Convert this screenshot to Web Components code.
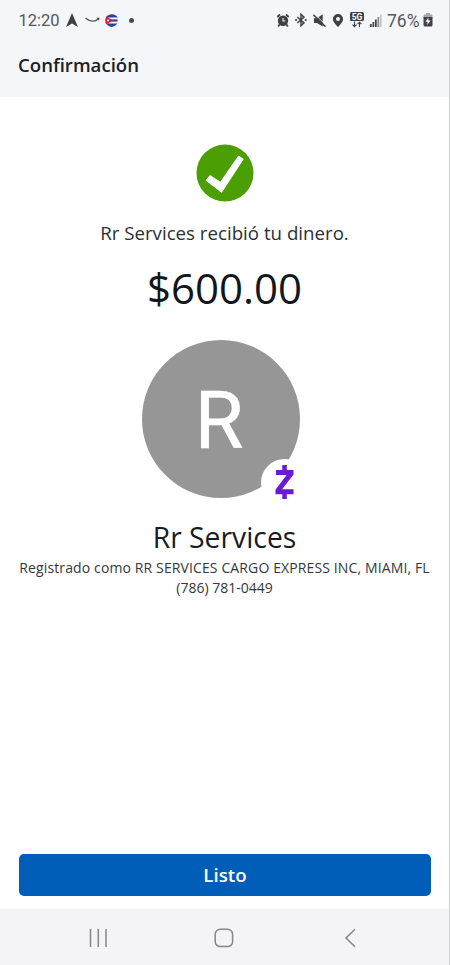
<!DOCTYPE html>
<html lang="es">
<head>
<meta charset="utf-8">
<title>Confirmación</title>
<style>
  html, body { margin: 0; height: 100%; }
  body { font-family: "Open Sans", "Noto Sans", sans-serif; background: #fff; overflow: hidden; }
</style>
</head>
<body>
<confirm-screen>
  <status-bar slot="top" time="12:20" battery="76%"></status-bar>
  <page-title slot="top">Confirmación</page-title>
  <success-check></success-check>
  <payment-message amount="$600.00">Rr Services recibió tu dinero.</payment-message>
  <contact-avatar initial="R"></contact-avatar>
  <contact-info name="Rr Services">
    <span>Registrado como RR SERVICES CARGO EXPRESS INC, MIAMI, FL</span>
    <span slot="phone">(786) 781-0449</span>
  </contact-info>
  <main-button slot="bottom">Listo</main-button>
  <nav-bar slot="bottom"></nav-bar>
</confirm-screen>

<script>
// every element clones its own template into an open shadow root
class BaseElement extends HTMLElement {
  constructor () {
    super();
    const template = document.createElement('template');
    template.innerHTML = this.constructor.html;
    this.attachShadow({ mode: 'open' });
    this.shadowRoot.appendChild(template.content.cloneNode(true));
  }

  fill (id, attr) {
    this.shadowRoot.getElementById(id).textContent = this.getAttribute(attr);
  }
}

class ConfirmScreen extends BaseElement {
  static html = `
    <style>
      :host {
        display: flex;
        flex-direction: column;
        box-sizing: border-box;
        height: 965px;
        width: 450px;
        border-right: 1px solid #cfd0d2;
        background: #fff;
      }
      header { height: 97px; background: #f5f6f9; }
      main {
        flex: 1;
        display: flex;
        flex-direction: column;
        align-items: center;
      }
    </style>
    <header><slot name="top"></slot></header>
    <main><slot></slot></main>
    <footer><slot name="bottom"></slot></footer>
  `;
}

class StatusBar extends BaseElement {
  static html = `
    <style>
      :host {
        display: flex;
        align-items: center;
        box-sizing: border-box;
        height: 40px;
        padding: 0 16px 0 18px;
        font: 16.5px/20px Roboto, sans-serif;
        color: #55575a;
      }
      svg { display: block; flex: none; fill: #3f4144; }
      .left, .right { display: flex; align-items: center; }
      .right { margin-left: auto; gap: 6px; }
      #time { width: 42px; padding-top: 1px; text-indent: 0.5px; }
      .arrow { margin-left: 6px; }
      .smile { margin-left: 7px; }
      .flag { margin-left: 5px; }
      .dot { margin-left: 11px; width: 5px; height: 5px; border-radius: 50%; background: #4a4c4f; }
      #battery { width: 35px; margin-left: -1px; padding-top: 1px; font-size: 17.5px; }
      .cell { margin-left: -5px; }
    </style>
    <div class="left">
      <span id="time"></span>
      <svg class="arrow" width="12" height="14" viewBox="0 0 12 14"><path d="M6 0L12 14L6 10.6L0 14Z"/></svg>
      <svg class="smile" width="15" height="8" viewBox="0 0 15 8"><path d="M.5 2C5 6 10 6 13.2 3" fill="none" stroke="#55575a" stroke-width="1.4"/><path d="M11.4 1.8L14.6 1.7L14 4.6"/></svg>
      <svg class="flag" width="13" height="13" viewBox="0 0 13 13">
        <path d="M2 2Q6-1 11 1.5L13 3.5H1Z" fill="#27449b"/>
        <path d="M1 5.4H12.5V7.6H1Z" fill="#27449b"/>
        <path d="M1.5 9.5H12.5Q8 15 3 11.6Z" fill="#27449b"/>
        <path d="M1.4 2.4L8 6.5L1.4 10.6Q-1 6.5 1.4 2.4Z" fill="#d51f3d"/>
        <circle cx="3" cy="6.5" r="1.1" fill="#fff"/>
      </svg>
      <span class="dot"></span>
    </div>
    <div class="right">
      <svg width="12" height="13" viewBox="0 0 12 13">
        <path d="M.3 3L3 .5M11.7 3L9 .5" stroke="#3f4144" stroke-width="1.9"/>
        <circle cx="6" cy="6.8" r="5.2"/><path d="M2.5 10.5L1.2 12.5M9.5 10.5L10.8 12.5" stroke="#3f4144" stroke-width="1.8"/>
        <path d="M6 4V7H8.4" fill="none" stroke="#f5f6f9" stroke-width="1.1"/>
      </svg>
      <svg width="12" height="14" viewBox="0 0 12 14"><path d="M2.3 4L9 9.9L6 12.8V1.2L9 4.1L2.3 10" fill="none" stroke="#3f4144" stroke-width="1.5"/><circle cx="1.1" cy="7" r="1.1"/><circle cx="10.7" cy="7" r="1.1"/></svg>
      <svg width="13" height="13" viewBox="0 0 13 13"><path d="M1 4.2H4L9.7 .3V12.4L4 9H1Z"/><path d="M1.4-.4L13.4 11.8" stroke="#f5f6f9" stroke-width=".9"/><path d="M.4 .8L12.4 12.6" stroke="#3f4144" stroke-width="1.5"/></svg>
      <svg width="12" height="13" viewBox="0 0 12 13"><path fill-rule="evenodd" d="M6 .1A5.1 5.1 0 0 1 11.1 5.2C11.1 8.4 6 12.9 6 12.9S.9 8.4 .9 5.2A5.1 5.1 0 0 1 6 .1ZM6 3.1A2 2 0 1 0 6 7.1A2 2 0 1 0 6 3.1Z"/></svg>
      <svg width="14" height="16" viewBox="0 0 14 16">
        <rect x="0" y="0" width="14" height="9" rx="1.6"/>
        <text x="7" y="7.7" text-anchor="middle" style="font:bold 8.5px Roboto" fill="#fff">5G</text>
        <path d="M4.5 9.5V14.5M2.5 12.6L4.5 14.6L6.5 12.6M9.5 15V10.3M7.5 12.2L9.5 10.2L11.5 12.2" fill="none" stroke="#3f4144" stroke-width="1.1"/>
      </svg>
      <svg width="12" height="13" viewBox="0 0 12 13"><path d="M0 10H1.7V13H0ZM2.5 8H4.2V13H2.5ZM5 5.5H6.7V13H5Z"/><path d="M7.5 3H9.2V13H7.5Z" fill="#85878a"/><path d="M10 .5H11.7V13H10Z" fill="#c4c5c8"/></svg>
      <span id="battery"></span>
      <svg class="cell" width="10" height="14" viewBox="0 0 10 14"><path d="M3 0H7V1.5H8.5Q9.5 1.5 9.5 2.5V5H.5V2.5Q.5 1.5 1.5 1.5H3Z" fill="#a5a6a9"/><path d="M.5 4H9.5V12Q9.5 13.5 8 13.5H2Q.5 13.5 .5 12Z"/><path d="M5.6 4.5L2.4 8.8H4.6L4.2 12L7.6 7.6H5.3Z" fill="#fff"/></svg>
    </div>
  `;

  connectedCallback () {
    this.fill('time', 'time');
    this.fill('battery', 'battery');
  }
}

class PageTitle extends BaseElement {
  static html = `
    <style>
      :host {
        display: block;
        padding: 12px 18px 0;
        font-size: 18.6px;
        line-height: 25px;
        font-weight: 600;
        color: #1b2126;
      }
    </style>
    <slot></slot>
  `;
}

class SuccessCheck extends BaseElement {
  static html = `
    <style>
      :host { display: block; margin-top: 47px; }
      svg { display: block; }
    </style>
    <svg width="58" height="58" viewBox="0 0 58 58">
      <circle cx="29" cy="29" r="28.5" fill="#4b9f05"/>
      <path d="M10.3 36.3L14 31.8L24.4 38.6L42.6 12.3L47 15.2L25.6 48Z" fill="#fff" stroke="#fff" stroke-width="1.2" stroke-linejoin="round"/>
    </svg>
  `;
}

class PaymentMessage extends BaseElement {
  static html = `
    <style>
      :host { display: block; text-align: center; color: #2b3035; }
      p { margin: 17px 0 0; font-size: 18.7px; line-height: 28px; }
      #amount { margin: 14px 0 0; font-size: 42px; line-height: 54px; color: #12171c; }
    </style>
    <p><slot></slot></p>
    <div id="amount"></div>
  `;

  connectedCallback () {
    this.fill('amount', 'amount');
  }
}

class ContactAvatar extends BaseElement {
  static html = `
    <style>
      :host {
        display: grid;
        place-items: center;
        position: relative;
        width: 158px;
        height: 158px;
        margin: 25px 7px 0 0;
        border-radius: 50%;
        background: #969696;
      }
      #initial { padding: 3px 4px 0 0; font: 79px/80px Roboto, sans-serif; color: #fff; -webkit-text-stroke: 0.6px #fff; }
      /* the badge sits over the lower right edge */
      .badge {
        position: absolute;
        right: -8px;
        bottom: -8px;
        width: 47px;
        height: 47px;
        border-radius: 50%;
        background: #fff;
      }
      .badge svg { display: block; margin: 6px 0 0 14px; }
    </style>
    <span id="initial"></span>
    <div class="badge">
      <svg width="19" height="34" viewBox="0 0 19 34" fill="#6a1bd1">
        <path d="M7.3 0H11.8V5H18.5V9.5L7.2 24.2H18.5V29.3H11.8V34H7.3V29.3H.5V24.8L11.6 10.1H1V5H7.3Z"/>
      </svg>
    </div>
  `;

  connectedCallback () {
    this.fill('initial', 'initial');
  }
}

class ContactInfo extends BaseElement {
  static html = `
    <style>
      :host { display: block; text-align: center; color: #34383d; }
      #name { margin: 19px 0 1px; font-size: 28.3px; line-height: 40px; font-weight: 400; color: #171c21; }
      .line { font-size: 14px; line-height: 20px; white-space: nowrap; }
      .wide { letter-spacing: 0.12px; }
    </style>
    <h2 id="name"></h2>
    <div class="line wide"><slot></slot></div>
    <div class="line"><slot name="phone"></slot></div>
  `;

  connectedCallback () {
    this.fill('name', 'name');
  }
}

class MainButton extends BaseElement {
  static html = `
    <style>
      :host { display: block; padding: 0 18px 13px 19px; }
      button {
        display: block;
        width: 100%;
        height: 42px;
        border: none;
        border-radius: 5px;
        padding: 0;
        background: #005eb8;
        color: #fff;
        font: 600 18.7px/42px "Open Sans", sans-serif;
      }
    </style>
    <button><slot></slot></button>
  `;
}

class NavBar extends BaseElement {
  static html = `
    <style>
      :host {
        display: flex;
        align-items: center;
        justify-content: space-between;
        box-sizing: border-box;
        height: 56px;
        padding: 2px 89px 0 85px;
        background: #f4f4f7;
      }
      svg { display: block; fill: none; stroke: #85868a; stroke-width: 1.5; }
      .home { margin-right: 4px; }
    </style>
    <svg width="26" height="20" viewBox="0 0 26 20"><path d="M5.5 1V19M13.3 1V19M21 1V19"/></svg>
    <svg class="home" width="20" height="20" viewBox="0 0 20 20"><rect x="1.2" y="1.2" width="17.4" height="17.4" rx="5"/></svg>
    <svg width="20" height="20" viewBox="0 0 20 20"><path d="M15 1.2L6 10L15 18.8"/></svg>
  `;
}

window.customElements.define('confirm-screen', ConfirmScreen);
window.customElements.define('status-bar', StatusBar);
window.customElements.define('page-title', PageTitle);
window.customElements.define('success-check', SuccessCheck);
window.customElements.define('payment-message', PaymentMessage);
window.customElements.define('contact-avatar', ContactAvatar);
window.customElements.define('contact-info', ContactInfo);
window.customElements.define('main-button', MainButton);
window.customElements.define('nav-bar', NavBar);
</script>
</body>
</html>
